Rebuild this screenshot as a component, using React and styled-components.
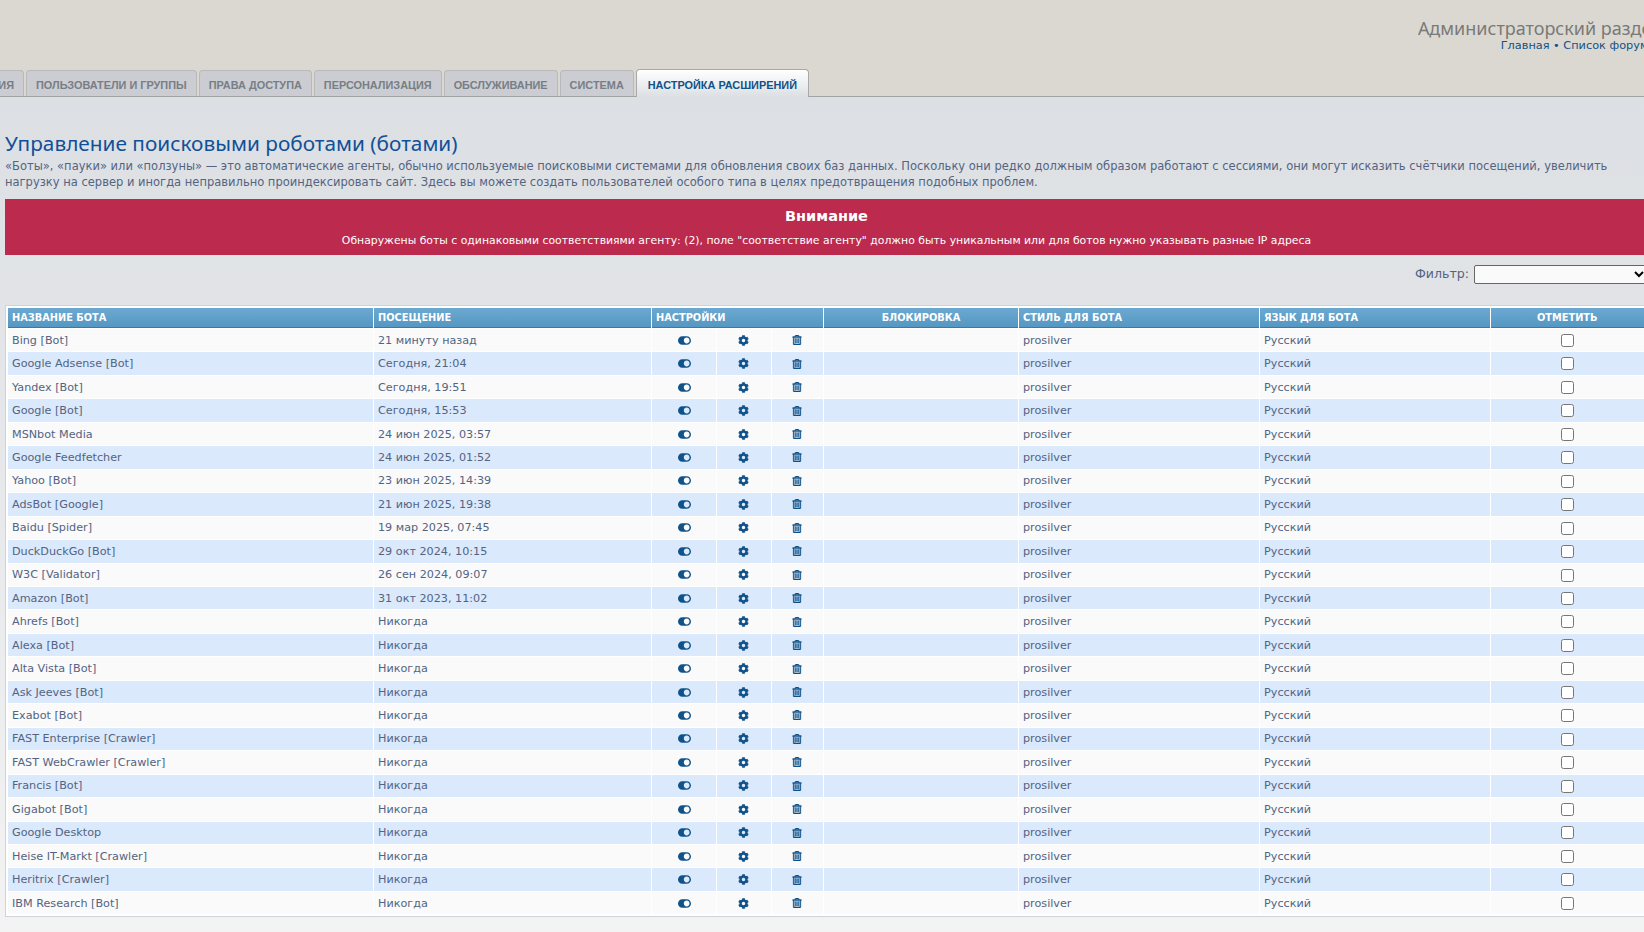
import React from 'react';
import styled, { createGlobalStyle } from 'styled-components';
import { FaToggleOn, FaCog, FaRegTrashAlt } from 'react-icons/fa';

const GlobalStyle = createGlobalStyle`
  html, body {
    margin: 0;
    padding: 0;
    height: 100%;
    overflow: hidden;
    background: #f3f3f3;
  }
  body {
    font-family: "DejaVu Sans", Verdana, sans-serif;
  }
`;

const Viewport = styled.div`
  height: 932px;
  overflow: hidden;
`;

const Page = styled.div`
  width: 1680px;
  height: 932px;
  background: linear-gradient(#dcdfe3 97px, #f3f3f3 100%);
`;

const Header = styled.header`
  height: 96px;
  background: #dbd8d1;
  border-bottom: 1px solid #a3a3a3;
  position: relative;
  display: flex;
  flex-direction: column;
`;

const HeaderText = styled.div`
  height: 70px;
  padding: 17px 18px 0 0;
  box-sizing: border-box;
  text-align: right;
`;

const SiteTitle = styled.div`
  font-family: "Noto Sans", sans-serif;
  font-size: 18px;
  line-height: 22px;
  color: #7a7a78;
`;

const SiteLinks = styled.div`
  font-size: 11.3px;
  line-height: 14px;
  color: #105289;
`;

const Tabs = styled.nav`
  display: flex;
  justify-content: flex-end;
  align-items: flex-end;
  gap: 2px;
  height: 27px;
  padding-right: 871px;
`;

const Tab = styled.div`
  flex: none;
  box-sizing: border-box;
  height: ${(p) => (p.$active ? '28px' : '26px')};
  padding: 0 ${(p) => (p.$active ? '11px' : '9px')};
  margin-bottom: ${(p) => (p.$active ? '-1px' : '0')};
  border: 1px solid ${(p) => (p.$active ? '#a9a9a9' : '#b9b9b9')};
  border-bottom: ${(p) => (p.$active ? 'none' : '0')};
  border-radius: 4px 4px 0 0;
  background: ${(p) => (p.$active ? 'linear-gradient(#ffffff, #dcdfe3)' : '#cbcdd2')};
  color: ${(p) => (p.$active ? '#105289' : '#777e85')};
  font-family: "Liberation Sans", Arial, sans-serif;
  font-size: 10.9px;
  font-weight: bold;
  line-height: ${(p) => (p.$active ? '30px' : '28px')};
  text-transform: uppercase;
  position: relative;
  z-index: 1;
`;

const Main = styled.main`
  width: 1643px;
  margin-left: 5px;
  padding-top: 34px;
`;

const Title = styled.h1`
  margin: 0;
  font-family: "Noto Sans", sans-serif;
  font-size: 20.8px;
  font-weight: normal;
  line-height: 24px;
  color: #115098;
`;

const Description = styled.p`
  margin: 3px 0 0;
  font-size: 11.5px;
  line-height: 16px;
  color: #536482;
`;

const Warning = styled.div`
  margin-top: 9px;
  height: 56px;
  box-sizing: border-box;
  padding-top: 8px;
  background: #bc2a4d;
  color: #ffffff;
  text-align: center;
`;

const WarningTitle = styled.div`
  font-size: 14.5px;
  font-weight: bold;
  line-height: 18px;
`;

const WarningText = styled.div`
  margin-top: 9px;
  font-size: 10.85px;
  line-height: 14px;
`;

const FilterRow = styled.div`
  display: flex;
  justify-content: flex-end;
  align-items: center;
  gap: 5px;
  height: 19px;
  margin-top: 10px;
`;

const FilterLabel = styled.label`
  font-size: 12.6px;
  line-height: 16px;
  margin-bottom: 2px;
  color: #536482;
`;

const FilterSelect = styled.select`
  width: 174px;
  height: 19px;
  box-sizing: border-box;
  border: 1px solid #666666;
  border-radius: 2px;
  background-color: #fafafa;
`;

const Table = styled.table`
  width: calc(100% - 1px);
  margin-top: 21px;
  table-layout: fixed;
  border-collapse: separate;
  border-spacing: 1px;
  border: 1px solid #d0d2d9;
  padding: 1px;
  background: #ffffff;
  font-size: 11.2px;
  color: #536482;
`;

const HeadCell = styled.th`
  height: 20px;
  padding: 0 4px;
  box-sizing: border-box;
  background: linear-gradient(#6ba9d1, #5597c3);
  border-bottom: 1px solid #2f7fae;
  color: #ffffff;
  font-size: 9.8px;
  font-weight: bold;
  text-align: ${(p) => (p.$center ? 'center' : 'left')};
  text-transform: uppercase;
`;

const Row = styled.tr`
  background: ${(p) => (p.$even ? '#dbe9fd' : '#fafafa')};
`;

const Cell = styled.td`
  height: 22.46px;
  padding: 0 4px;
  box-sizing: border-box;
  text-align: ${(p) => (p.$center ? 'center' : 'left')};
  white-space: nowrap;
`;

const IconCell = styled(Cell)`
  padding: 0;
  text-align: center;
  color: #105289;
  line-height: 0;
`;

const TrashIcon = styled(FaRegTrashAlt)`
  stroke: currentColor;
  stroke-width: 24px;
`;

const Check = styled.input`
  margin: 0;
  vertical-align: middle;
`;

const tabs = [
  'Сообщения',
  'Пользователи и группы',
  'Права доступа',
  'Персонализация',
  'Обслуживание',
  'Система',
];

const bots = [
  ['Bing [Bot]', '21 минуту назад'],
  ['Google Adsense [Bot]', 'Сегодня, 21:04'],
  ['Yandex [Bot]', 'Сегодня, 19:51'],
  ['Google [Bot]', 'Сегодня, 15:53'],
  ['MSNbot Media', '24 июн 2025, 03:57'],
  ['Google Feedfetcher', '24 июн 2025, 01:52'],
  ['Yahoo [Bot]', '23 июн 2025, 14:39'],
  ['AdsBot [Google]', '21 июн 2025, 19:38'],
  ['Baidu [Spider]', '19 мар 2025, 07:45'],
  ['DuckDuckGo [Bot]', '29 окт 2024, 10:15'],
  ['W3C [Validator]', '26 сен 2024, 09:07'],
  ['Amazon [Bot]', '31 окт 2023, 11:02'],
  ['Ahrefs [Bot]', 'Никогда'],
  ['Alexa [Bot]', 'Никогда'],
  ['Alta Vista [Bot]', 'Никогда'],
  ['Ask Jeeves [Bot]', 'Никогда'],
  ['Exabot [Bot]', 'Никогда'],
  ['FAST Enterprise [Crawler]', 'Никогда'],
  ['FAST WebCrawler [Crawler]', 'Никогда'],
  ['Francis [Bot]', 'Никогда'],
  ['Gigabot [Bot]', 'Никогда'],
  ['Google Desktop', 'Никогда'],
  ['Heise IT-Markt [Crawler]', 'Никогда'],
  ['Heritrix [Crawler]', 'Никогда'],
  ['IBM Research [Bot]', 'Никогда'],
];

const App = () => (
  <Viewport>
    <GlobalStyle />
    <Page>
      <Header>
        <HeaderText>
          <SiteTitle>Администраторский раздел</SiteTitle>
          <SiteLinks>Главная • Список форумов</SiteLinks>
        </HeaderText>
        <Tabs>
          {tabs.map((t) => (
            <Tab key={t}>{t}</Tab>
          ))}
          <Tab $active>Настройка расширений</Tab>
        </Tabs>
      </Header>
      <Main>
        <Title>Управление поисковыми роботами (ботами)</Title>
        <Description>
          «Боты», «пауки» или «ползуны» — это автоматические агенты, обычно используемые поисковыми системами для обновления своих баз данных. Поскольку они редко должным образом работают с сессиями, они могут исказить счётчики посещений, увеличить
          <br />
          нагрузку на сервер и иногда неправильно проиндексировать сайт. Здесь вы можете создать пользователей особого типа в целях предотвращения подобных проблем.
        </Description>
        <Warning>
          <WarningTitle>Внимание</WarningTitle>
          <WarningText>
            Обнаружены боты с одинаковыми соответствиями агенту: (2), поле "соответствие агенту" должно быть уникальным или для ботов нужно указывать разные IP адреса
          </WarningText>
        </Warning>
        <FilterRow>
          <FilterLabel>Фильтр:</FilterLabel>
          <FilterSelect />
        </FilterRow>
        <Table>
          <colgroup>
            <col style={{ width: 365 }} />
            <col style={{ width: 277 }} />
            <col style={{ width: 64 }} />
            <col style={{ width: 53.5 }} />
            <col style={{ width: 51.5 }} />
            <col style={{ width: 194 }} />
            <col style={{ width: 240 }} />
            <col style={{ width: 229.5 }} />
            <col />
          </colgroup>
          <thead>
            <tr>
              <HeadCell>Название бота</HeadCell>
              <HeadCell>Посещение</HeadCell>
              <HeadCell colSpan={3}>Настройки</HeadCell>
              <HeadCell $center>Блокировка</HeadCell>
              <HeadCell>Стиль для бота</HeadCell>
              <HeadCell>Язык для бота</HeadCell>
              <HeadCell $center>Отметить</HeadCell>
            </tr>
          </thead>
          <tbody>
            {bots.map(([name, visit], i) => (
              <Row key={name} $even={i % 2 === 1}>
                <Cell>{name}</Cell>
                <Cell>{visit}</Cell>
                <IconCell>
                  <FaToggleOn size={13} />
                </IconCell>
                <IconCell>
                  <FaCog size={11} />
                </IconCell>
                <IconCell>
                  <TrashIcon size={10} />
                </IconCell>
                <Cell />
                <Cell>prosilver</Cell>
                <Cell>Русский</Cell>
                <Cell $center>
                  <Check type="checkbox" />
                </Cell>
              </Row>
            ))}
          </tbody>
        </Table>
      </Main>
    </Page>
  </Viewport>
);

export default App;
